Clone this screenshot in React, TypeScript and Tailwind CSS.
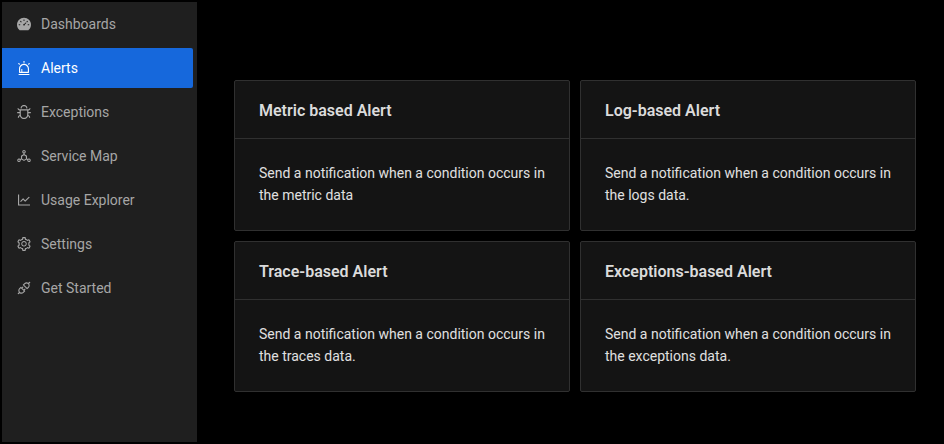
import { AiFillDashboard, AiOutlineAlert, AiOutlineBug, AiOutlineDeploymentUnit, AiOutlineLineChart, AiOutlineSetting, AiOutlineApi } from "react-icons/ai";

const nav = [
  { label: "Dashboards", Icon: AiFillDashboard },
  { label: "Alerts", Icon: AiOutlineAlert, active: true },
  { label: "Exceptions", Icon: AiOutlineBug },
  { label: "Service Map", Icon: AiOutlineDeploymentUnit },
  { label: "Usage Explorer", Icon: AiOutlineLineChart },
  { label: "Settings", Icon: AiOutlineSetting },
  { label: "Get Started", Icon: AiOutlineApi },
];

const cards = [
  { title: "Metric based Alert", text: "Send a notification when a condition occurs in the metric data" },
  { title: "Log-based Alert", text: "Send a notification when a condition occurs in the logs data." },
  { title: "Trace-based Alert", text: "Send a notification when a condition occurs in the traces data." },
  { title: "Exceptions-based Alert", text: "Send a notification when a condition occurs in the exceptions data." },
];

export default function App() {
  return (
    <div className="flex h-[444px] w-[944px] overflow-hidden bg-black p-[2px] font-['Roboto',sans-serif] text-[14px]">
      <aside className="flex w-[195px] shrink-0 flex-col gap-[4px] bg-[#1f1f1f] pt-[2px]">
        {nav.map(({ label, Icon, active }) => (
          <div
            key={label}
            className={`flex h-[40px] w-[191px] items-center gap-[9px] rounded-r-[2px] pl-[14px] ${
              active ? "bg-[#1668dc] text-white" : "text-[#a6a6a6]"
            }`}
          >
            <Icon className="h-[16px] w-[16px] shrink-0" />
            <span className="leading-[22px]">{label}</span>
          </div>
        ))}
      </aside>
      <main className="pl-[37px] pt-[78px]">
        <div className="grid grid-cols-[336px_336px] gap-[10px]">
          {cards.map((c) => (
            <div key={c.title} className="h-[151px] rounded-[2px] border border-[#303030] bg-[#141414]">
              <div className="flex h-[58px] items-center border-b border-[#303030] px-[24px] pt-[2px] text-[16px] font-semibold leading-[24px] text-[#dbdbdb]">
                {c.title}
              </div>
              <p className="px-[24px] pt-[23px] leading-[22px] text-[#e0e0e0]">{c.text}</p>
            </div>
          ))}
        </div>
      </main>
    </div>
  );
}
